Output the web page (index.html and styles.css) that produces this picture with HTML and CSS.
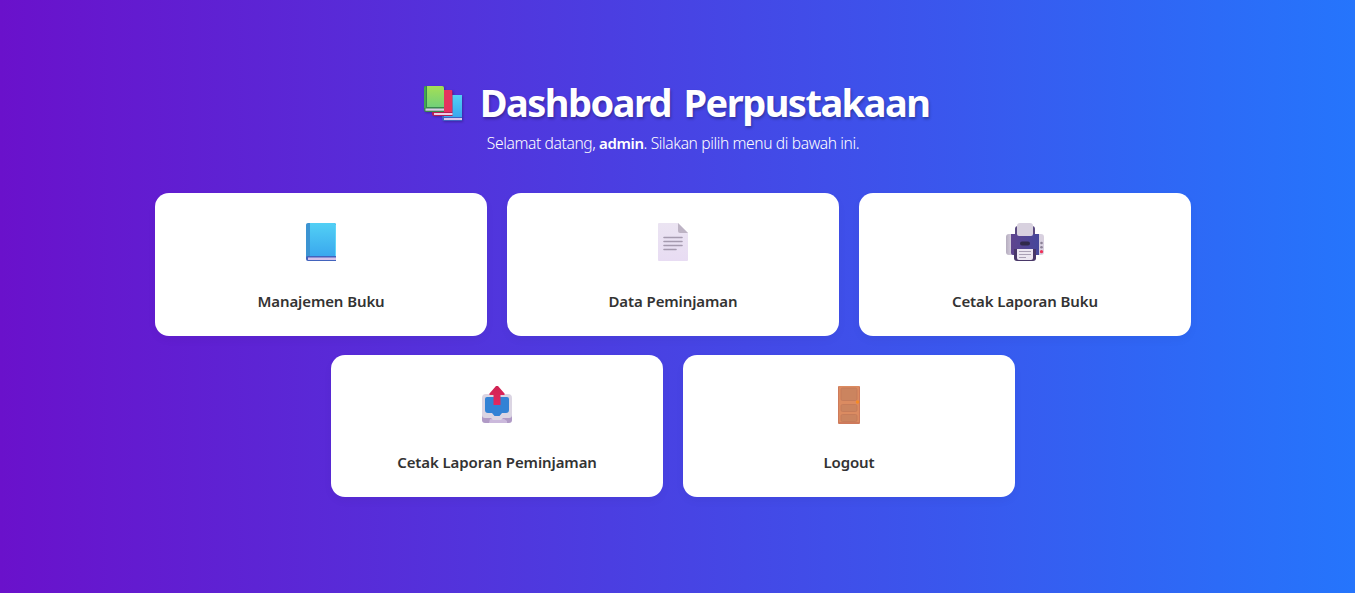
FILE: index.html
```html
<!DOCTYPE html>
<html lang="id">
<head>
<meta charset="utf-8">
<title>Dashboard Perpustakaan</title>
<link rel="stylesheet" href="styles.css">
</head>
<body>
<main class="dashboard">
  <header class="header">
    <h1 class="title">
      <svg class="title-icon" width="42" height="40" viewBox="0 0 42 40">
        <defs>
          <linearGradient id="green" x1="0" y1="0" x2="0" y2="1"><stop offset="0" stop-color="#a5df55"/><stop offset="1" stop-color="#72d078"/></linearGradient>
          <linearGradient id="blue" x1="0" y1="0" x2="0" y2="1"><stop offset="0" stop-color="#52d0f5"/><stop offset="1" stop-color="#3aa8ee"/></linearGradient>
        </defs>
        <path d="M20 10h20v26H22a2 2 0 0 1-2-2z" fill="#3f62c4"/><path d="M22 10h18v22H22z" fill="url(#blue)"/><path d="M22 33h18v2H22z" fill="#dcc6ec"/>
        <path d="M10 5h19a1.500 1.500 0 0 1 1.500 1.500V31H12a2 2 0 0 1-2-2z" fill="#b51e55"/><path d="M12 5h18v22H12z" fill="#e5325f"/><path d="M12 28h18.500v2H12z" fill="#edd0e6"/>
        <path d="M3.500 1H20a2 2 0 0 1 2 2v24H4a2 2 0 0 1-2-2V2.500A1.500 1.500 0 0 1 3.500 1z" fill="#39864f"/><path d="M2 3a2 2 0 0 1 2-2v22H2z" fill="#42a74f"/><path d="M5 1h15a2 2 0 0 1 2 2v19H5z" fill="url(#green)"/><path d="M3.500 23.500H22v2.200H3.500z" fill="#d7cce5"/>
      </svg>
      <span class="title-text">Dashboard Perpustakaan</span>
    </h1>
    <p class="welcome">Selamat datang, <strong class="user">admin</strong>. Silakan pilih menu di bawah ini.</p>
  </header>
  <nav class="menu">
    <a class="card">
      <svg class="icon" width="40" height="40" viewBox="0 0 40 40">
        <path d="M7 1h28v37H7a2 2 0 0 1-2-2V3a2 2 0 0 1 2-2z" fill="#4263bd"/><path d="M7 0h26a2 2 0 0 1 2 2v31H7a3 3 0 0 0-2 1V2a2 2 0 0 1 2-2z" fill="#3b94d2"/><path d="M9 0h24a2 2 0 0 1 2 2v31H9z" fill="url(#blue)"/><path d="M7 34.500h28V37H7z" fill="#d5c2eb"/><path d="M34 2h1v31h-1z" fill="#60d5f7"/>
      </svg>
      <span class="label">Manajemen Buku</span>
    </a>
    <a class="card">
      <svg class="icon" width="40" height="40" viewBox="0 0 40 40">
        <defs><linearGradient id="paper" x1="0" y1="0" x2="0" y2="1"><stop offset="0" stop-color="#ebe4f2"/><stop offset="1" stop-color="#e8dcf3"/></linearGradient></defs>
        <path d="M6 0h19l10 10v27a1 1 0 0 1-1 1H6a1 1 0 0 1-1-1V1a1 1 0 0 1 1-1z" fill="url(#paper)"/><path d="M25 0l10 10h-8a2 2 0 0 1-2-2z" fill="#bdb3c4"/>
        <path d="M11 14.500h18M11 18.500h18M11 22.500h18M11 26.500h12" stroke="#a59aaf" stroke-width="1.600" stroke-linecap="round"/>
      </svg>
      <span class="label">Data Peminjaman</span>
    </a>
    <a class="card">
      <svg class="icon" width="40" height="40" viewBox="0 0 40 40">
        <defs><linearGradient id="printer"><stop offset="0" stop-color="#5f448e"/><stop offset="1" stop-color="#45479b"/></linearGradient><linearGradient id="side"><stop offset="0" stop-color="#b5adbf"/><stop offset=".15" stop-color="#d8d0df"/></linearGradient></defs>
        <path d="M10 11V6a3 3 0 0 1 3-3h14a3 3 0 0 1 3 3v5z" fill="#5a4a80"/><path d="M12 13V3a3 3 0 0 1 3-3h10a3 3 0 0 1 3 3v10z" fill="#d8d1df"/>
        <rect x="1" y="11" width="38" height="21" rx="3" fill="url(#side)"/><path d="M6 11h6a2 2 0 0 0 2 2h12a2 2 0 0 0 2-2h6v21H8a2 2 0 0 1-2-2z" fill="url(#printer)"/>
        <rect x="15" y="18.500" width="10" height="4" rx="2" fill="#30294b"/><path d="M9 26h22v9a3 3 0 0 1-3 3H12a3 3 0 0 1-3-3z" fill="#493768"/><path d="M12 26h16v9a2 2 0 0 1-2 2H14a2 2 0 0 1-2-2z" fill="#ece6f1"/>
        <path d="M14 28.500h12M14 31.500h12M14 34.500h7" stroke="#aaa0b5" stroke-width="1"/><circle cx="36.500" cy="20" r="1.300" fill="#8b8197"/><circle cx="36.500" cy="24.300" r="1.300" fill="#8b8197"/><circle cx="36.500" cy="28.700" r="1.600" fill="#ef3158"/>
      </svg>
      <span class="label">Cetak Laporan Buku</span>
    </a>
    <a class="card card-lower">
      <svg class="icon" width="40" height="40" viewBox="0 0 40 40">
        <defs><linearGradient id="arrow" x1="0" y1="0" x2="0" y2="1"><stop offset="0" stop-color="#ce2352"/><stop offset="1" stop-color="#e4265f"/></linearGradient></defs>
        <path d="M5 27h30v7a3 3 0 0 1-3 3H8a3 3 0 0 1-3-3z" fill="#b09ac6"/><path d="M13 33h14l3 2v2H12z" fill="#cbb9dc"/>
        <path d="M9 8h22a4 4 0 0 1 4 4v17a3 3 0 0 1-3 3h-6l-2 2h-8l-2-2H8a3 3 0 0 1-3-3V12a4 4 0 0 1 4-4z" fill="#dbd5e3"/>
        <path d="M10 11h20a2 2 0 0 1 2 2v11a3 3 0 0 1-3 3h-4l-2.500 3h-5L15 27h-4a3 3 0 0 1-3-3V13a2 2 0 0 1 2-2z" fill="#3282d5"/>
        <path d="M19 0q1-1 2 0l6.500 7.500q.8 1.500-.8 1.500H23.500v10h-7V9h-3.200q-1.600 0-.8-1.500z" fill="url(#arrow)"/>
      </svg>
      <span class="label">Cetak Laporan Peminjaman</span>
    </a>
    <a class="card card-lower">
      <svg class="icon" width="40" height="40" viewBox="0 0 40 40">
        <rect x="9" y="0" width="22" height="38" rx="1" fill="#ce7a5b"/><path d="M10 0h20v36H10z" fill="#db8b61"/>
        <g fill="#cb845f" stroke="#c37a59" stroke-width=".8"><rect x="12" y="2" width="16" height="12.500" rx="1.500"/><rect x="12" y="18.500" width="16" height="7" rx="1.500"/><rect x="12" y="28.500" width="16" height="7" rx="1.500"/></g><circle cx="28.500" cy="16" r="1.700" fill="#f58b25"/>
      </svg>
      <span class="label">Logout</span>
    </a>
  </nav>
</main>
</body>
</html>
```
FILE: styles.css
```css
* { box-sizing: border-box; }
body {
  margin: 0;
  min-height: 593px;
  font-family: "Noto Sans", "Open Sans", sans-serif;
  background: linear-gradient(to right, #6a11cb, #2575fc);
}
.dashboard {
  width: 1346px;
  padding-top: 75px;
  display: flex;
  flex-direction: column;
  align-items: center;
}
.header { height: 118.300px; color: #fff; text-align: center; }
.title {
  margin: 0;
  height: 56px;
  display: flex;
  align-items: center;
  justify-content: center;
  gap: 16px;
  padding-left: 5px;
  font-size: 38px;
  font-weight: 700;
  line-height: 54px;
  letter-spacing: -1.520px;
  word-spacing: 4px;
  white-space: nowrap;
  text-shadow: 1px 2px 3px rgba(0, 0, 0, .3);
}
.title-text { padding-bottom: 2px; }
.title-icon { margin-top: 4px; filter: drop-shadow(1px 1px 1px rgba(0, 0, 0, .25)); }
.welcome { margin: 0; font-size: 15.600px; line-height: 25px; font-weight: 300; letter-spacing: -.380px; white-space: nowrap; }
.user { font-weight: 600; font-size: 15px; }
.menu { width: 1056px; display: flex; flex-wrap: wrap; justify-content: center; gap: 19.200px 20px; }
.card {
  width: 332px;
  height: 142.400px;
  padding-top: 30px;
  display: flex;
  flex-direction: column;
  align-items: center;
  gap: 26px;
  border-radius: 14px;
  background: #fff;
  color: #333;
  box-shadow: 0 4px 10px rgba(0, 0, 0, .04);
}
.card-lower { padding-top: 30.800px; gap: 24.400px; }
.icon { flex: none; }
.label { font-size: 15px; line-height: 24px; font-weight: 600; letter-spacing: -.100px; white-space: nowrap; }
```
